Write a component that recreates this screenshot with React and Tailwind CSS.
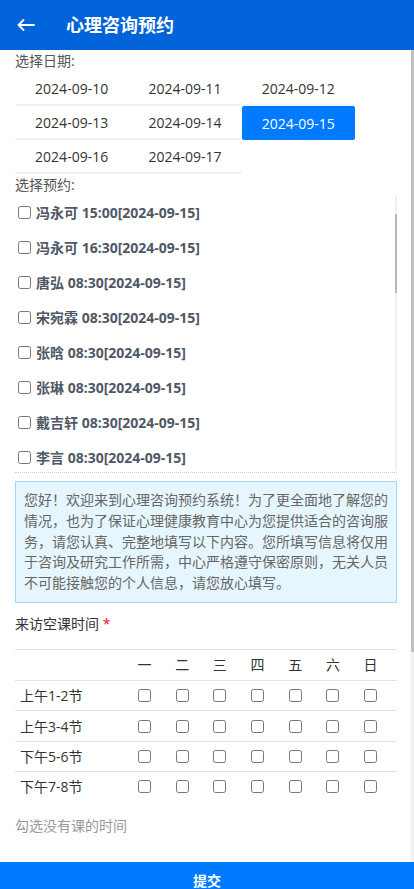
import React, { useState } from "react";

const dates = [
    "2024-09-10",
    "2024-09-11",
    "2024-09-12",
    "2024-09-13",
    "2024-09-14",
    "2024-09-15",
    "2024-09-16",
    "2024-09-17",
];

const slots = [
    "冯永可 15:00[2024-09-15]",
    "冯永可 16:30[2024-09-15]",
    "唐弘 08:30[2024-09-15]",
    "宋宛霖 08:30[2024-09-15]",
    "张晗 08:30[2024-09-15]",
    "张琳 08:30[2024-09-15]",
    "戴吉轩 08:30[2024-09-15]",
    "李言 08:30[2024-09-15]",
    "唐弘 10:00[2024-09-15]",
    "宋宛霖 10:00[2024-09-15]",
    "张晗 10:00[2024-09-15]",
    "张琳 10:00[2024-09-15]",
    "戴吉轩 10:00[2024-09-15]",
    "李言 10:00[2024-09-15]",
    "唐弘 14:00[2024-09-15]",
    "宋宛霖 14:00[2024-09-15]",
    "张晗 14:00[2024-09-15]",
    "张琳 14:00[2024-09-15]",
    "戴吉轩 14:00[2024-09-15]",
    "李言 14:00[2024-09-15]",
    "唐弘 15:30[2024-09-15]",
    "宋宛霖 15:30[2024-09-15]",
    "张晗 15:30[2024-09-15]",
    "张琳 15:30[2024-09-15]",
    "戴吉轩 15:30[2024-09-15]",
    "李言 15:30[2024-09-15]",
];

const days = ["一", "二", "三", "四", "五", "六", "日"];
const periods = ["上午1-2节", "上午3-4节", "下午5-6节", "下午7-8节"];

const notice =
    "您好！欢迎来到心理咨询预约系统！为了更全面地了解您的情况，也为了保证心理健康教育中心为您提供适合的咨询服务，请您认真、完整地填写以下内容。您所填写信息将仅用于咨询及研究工作所需，中心严格遵守保密原则，无关人员不可能接触您的个人信息，请您放心填写。";

// thin scrollbar drawn on top, the browser's own one is hidden in the shot
const ScrollHint = ({ className, thumbClass }) => (
    <div className={`pointer-events-none absolute ${className}`}>
        <div className={thumbClass} />
    </div>
);

const App = () => {
    const [activeDate, setActiveDate] = useState("2024-09-15");

    return (
        <div
            className="flex h-screen flex-col overflow-hidden bg-white text-[14px] text-[#333]"
            style={{ fontFamily: '"Open Sans", "Noto Sans CJK SC", sans-serif' }}
        >
            <header className="flex h-[50px] shrink-0 items-center bg-[#0063d9] text-white">
                <button className="ml-[16px] flex h-[20px] w-[20px] items-center justify-center">
                    <svg width="18" height="12" viewBox="0 0 18 12" fill="none">
                        <path
                            d="M17 6H1.5M6.5 1L1.5 6l5 5"
                            stroke="white"
                            strokeWidth="1.8"
                            strokeLinecap="round"
                            strokeLinejoin="round"
                        />
                    </svg>
                </button>
                <h1 className="ml-[30px] text-[18px] font-bold">心理咨询预约</h1>
            </header>

            <div className="relative h-[812px] shrink-0">
                <main className="h-full overflow-y-auto pl-[15px] pr-[17px]">
                    <p className="leading-[22px] text-[#555]">选择日期:</p>

                    <div className="flex w-[340px] flex-wrap">
                        {dates.map((d) => (
                            <button
                                key={d}
                                onClick={() => setActiveDate(d)}
                                className={`flex h-[34px] w-[113.3px] items-center justify-center ${
                                    d === activeDate
                                        ? "rounded-[2px] bg-[#007bff] text-white"
                                        : "border-b-2 border-[#f3f3f3] text-[#333]"
                                }`}
                            >
                                {d}
                            </button>
                        ))}
                    </div>

                    <p className="leading-[21px] text-[#555]">选择预约:</p>

                    <div className="relative">
                        <div className="h-[278px] overflow-y-auto border-b border-dotted border-[#c8c8c8]">
                            {slots.map((s) => (
                                <label key={s} className="flex h-[35px] items-center font-bold text-[#4f5866]">
                                    <input type="checkbox" className="ml-[3px] mr-[5px] h-[13px] w-[13px]" />
                                    {s}
                                </label>
                            ))}
                        </div>
                        <ScrollHint
                            className="right-0 top-0 h-[276px] w-[2px] bg-[#f0f0f0]"
                            thumbClass="mt-[19px] h-[79px] w-full bg-[#b9b9b9]"
                        />
                    </div>

                    <div className="mt-[8px] border border-[#a3d9f7] bg-[#e6f6fe] py-[8px] pl-[8px] pr-[6px] leading-[20.8px] text-[#666]">
                        {notice}
                    </div>

                    <p className="mt-[10px] leading-[22px] text-[#333]">
                        来访空课时间 <span className="text-[#f03]">*</span>
                    </p>

                    <div className="mt-[14px] border-t border-[#e2e2e2]">
                        <div className="grid h-[30px] grid-cols-[110.6px_repeat(7,37.7px)] items-center">
                            <div />
                            {days.map((d) => (
                                <div key={d} className="text-center">
                                    {d}
                                </div>
                            ))}
                        </div>
                        {periods.map((p) => (
                            <div
                                key={p}
                                className="grid h-[30.4px] grid-cols-[110.6px_repeat(7,37.7px)] items-center border-t border-[#e2e2e2]"
                            >
                                <div className="pl-[5px]">{p}</div>
                                {days.map((d) => (
                                    <div key={d} className="flex justify-center">
                                        <input type="checkbox" className="h-[13px] w-[13px]" />
                                    </div>
                                ))}
                            </div>
                        ))}
                    </div>

                    <p className="mt-[13px] leading-[22px] text-[#999]">勾选没有课的时间</p>

                    <div className="mt-[26px]">
                        <p className="leading-[22px]">
                            联系电话 <span className="text-[#f03]">*</span>
                        </p>
                        <input
                            type="text"
                            className="mt-[8px] h-[36px] w-full rounded-[2px] border border-[#ddd] px-[10px]"
                        />
                    </div>

                    <div className="mt-[20px] pb-[40px]">
                        <p className="leading-[22px]">
                            咨询问题描述 <span className="text-[#f03]">*</span>
                        </p>
                        <textarea className="mt-[8px] h-[110px] w-full rounded-[2px] border border-[#ddd] px-[10px] py-[6px]" />
                    </div>
                </main>
                <ScrollHint
                    className="right-0 top-0 h-full w-[3px] bg-[#f1f1f1]"
                    thumbClass="h-[602px] w-full bg-[#c1c1c1]"
                />
            </div>

            <button className="h-[36px] w-full shrink-0 bg-[#007bff] text-[14px] font-bold text-white">提交</button>
        </div>
    );
};

export default App;
